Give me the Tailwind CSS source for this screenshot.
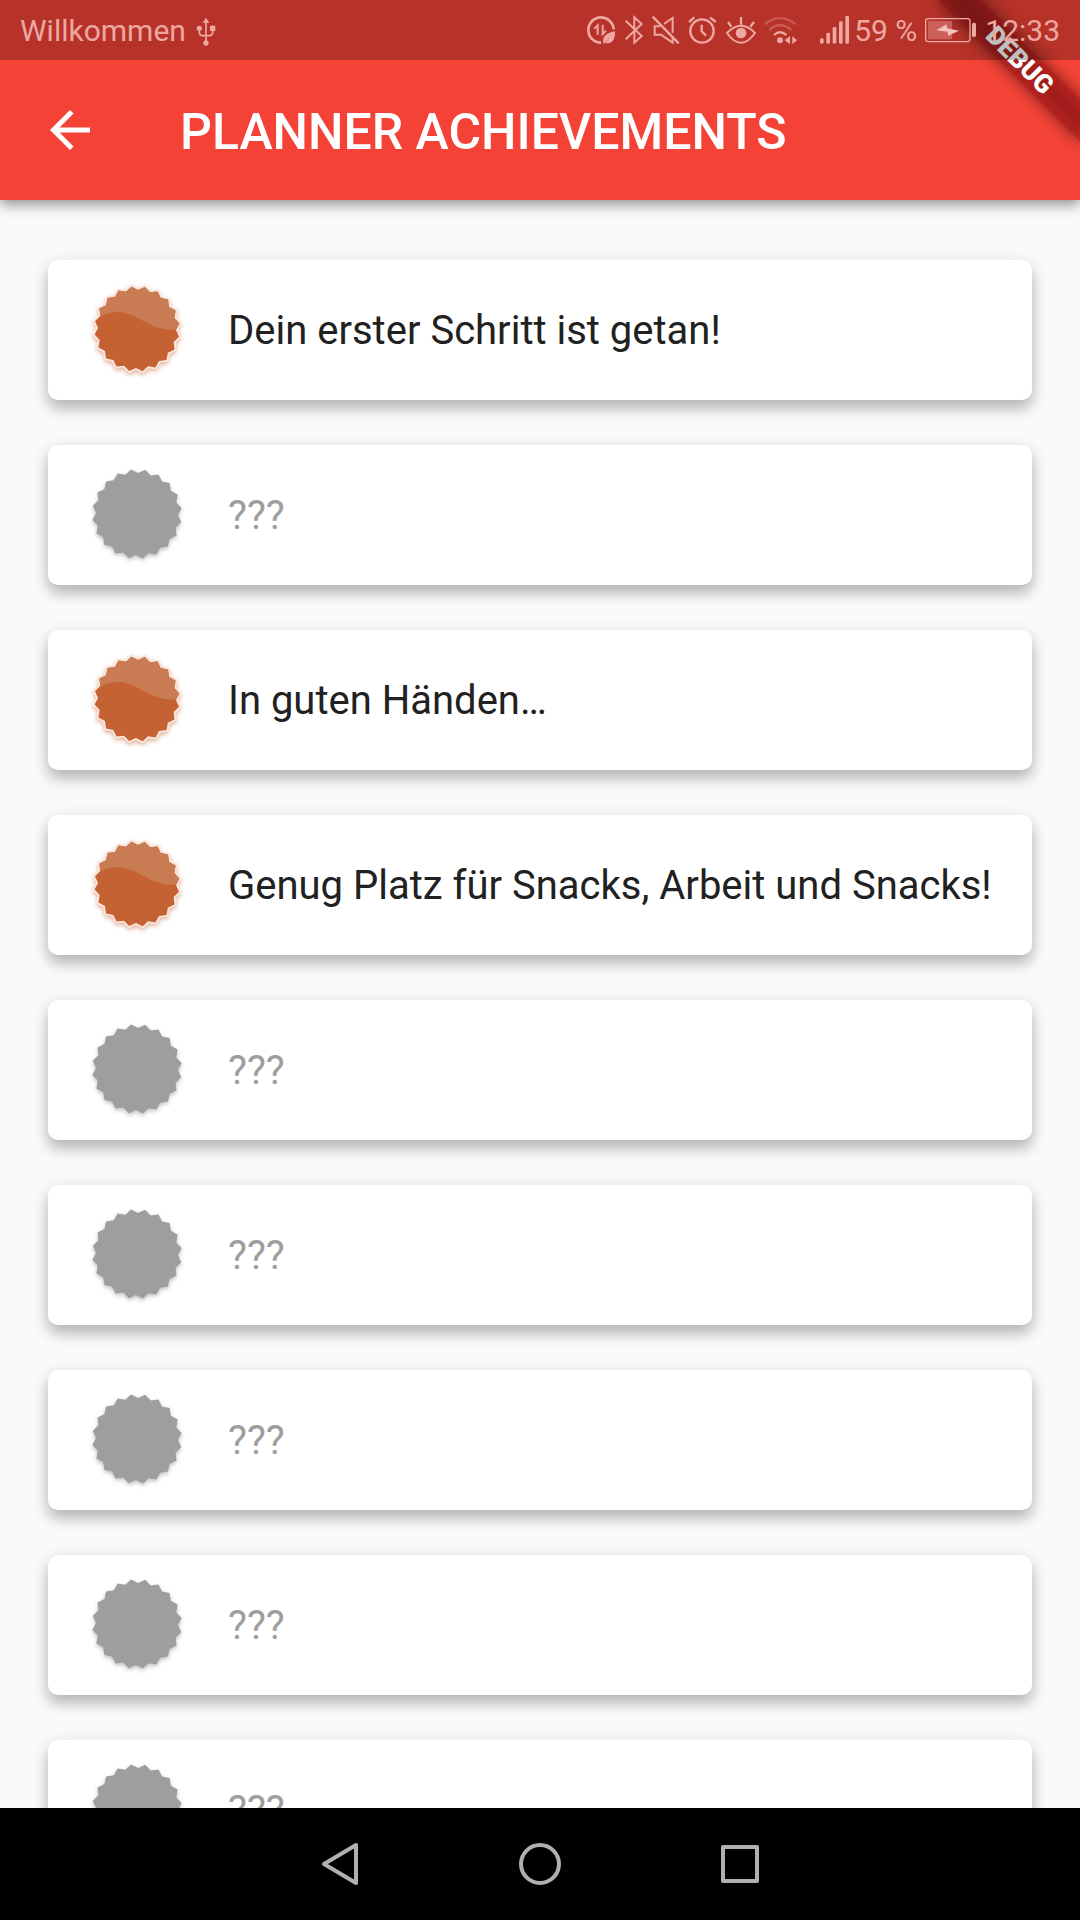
<!DOCTYPE html>
<html lang="de">
<head>
<meta charset="utf-8">
<meta name="viewport" content="width=device-width, initial-scale=1">
<title>Planner Achievements</title>
<script src="https://cdn.jsdelivr.net/npm/@tailwindcss/browser@4"></script>
</head>
<body class="relative flex h-screen flex-col overflow-hidden bg-[#fafafa] font-['Roboto',sans-serif] text-[#212121]">

<svg class="absolute size-0" aria-hidden="true">
  <symbol id="seal" viewBox="-48 -48 96 96">
    <path d="M8.2-44.2 13.7-38.6 21.5-39.5 25-32.5 32.6-31 33.8-23.2 40.6-19.4 39.3-11.6 44.6-5.9 41 1.1 44.2 8.2 38.6 13.7 39.5 21.5 32.5 25 31 32.6 23.2 33.8 19.4 40.6 11.6 39.3 5.9 44.6-1.1 41-8.2 44.2-13.7 38.6-21.5 39.5-25 32.5-32.6 31-33.8 23.2-40.6 19.4-39.3 11.6-44.6 5.9-41-1.1-44.2-8.2-38.6-13.7-39.5-21.5-32.5-25-31-32.6-23.2-33.8-19.4-40.6-11.6-39.3-5.9-44.6 1.1-41Z"/>
  </symbol>
  <clipPath id="sealClip">
    <path transform="scale(.95)" d="M8.2-44.2 13.7-38.6 21.5-39.5 25-32.5 32.6-31 33.8-23.2 40.6-19.4 39.3-11.6 44.6-5.9 41 1.1 44.2 8.2 38.6 13.7 39.5 21.5 32.5 25 31 32.6 23.2 33.8 19.4 40.6 11.6 39.3 5.9 44.6-1.1 41-8.2 44.2-13.7 38.6-21.5 39.5-25 32.5-32.6 31-33.8 23.2-40.6 19.4-39.3 11.6-44.6 5.9-41-1.1-44.2-8.2-38.6-13.7-39.5-21.5-32.5-25-31-32.6-23.2-33.8-19.4-40.6-11.6-39.3-5.9-44.6 1.1-41Z"/>
  </clipPath>
  <symbol id="bronze" viewBox="-48 -48 96 96">
    <use href="#seal" x="-48" y="-48" width="96" height="96" fill="#fbe6dd"/>
    <g clip-path="url(#sealClip)">
      <path fill="#c46233" d="M-48-48H48V48H-48Z"/>
      <path fill="#c97b54" d="M-48-48H48V-1C16 7 4-16-19-17-28-17-36-13-48-7Z"/>
    </g>
  </symbol>
</svg>

<header class="relative z-10 shrink-0 bg-[#f44336] text-white shadow-[0_5px_12px_rgba(0,0,0,0.4)]">
  <!-- diagonal debug ribbon over the top right corner, below the status bar's tint -->
  <div class="pointer-events-none absolute top-0 right-0 size-[200px] overflow-hidden">
    <div class="absolute top-[70px] left-[100px] h-[30px] w-[200px] origin-[100px_-70px] rotate-45">
      <div class="absolute inset-0 bg-black/50 blur-[8px]"></div>
      <div class="relative flex h-full items-center justify-center bg-[#b71c1c]/63 text-[26px] leading-none font-black">DEBUG</div>
    </div>
  </div>
  <div class="relative flex h-[60px] items-center bg-black/25 px-5 text-[30px] leading-none text-[#eda8a2]">
    <span class="mr-auto flex items-center gap-[10px] pt-[2px]">Willkommen
      <svg class="h-[30px] w-5" viewBox="582 45 60 90" fill="currentColor" stroke="currentColor" aria-label="USB"><path fill="none" stroke-width="5" d="M612 62V126M592 84V94Q592 104 602 104H622Q632 104 632 94V84"/><path stroke="none" d="M612 50 622 66H602Z"/><circle cx="612" cy="126" r="8" stroke="none"/><circle cx="592" cy="82" r="8" stroke="none"/><path stroke="none" d="M624 74H640V90H624Z"/></svg>
    </span>
    <span class="flex items-center gap-[6px]">
      <svg class="h-[30px] w-8" viewBox="42 45 96 90" fill="none" stroke="currentColor" stroke-width="8" aria-hidden="true"><path d="M131 88A38 38 0 1 0 93 128"/><path stroke-width="6" d="M73 86 83 76V104M98 74V102L108 92"/><path fill="currentColor" stroke="none" d="M101 133C94 108 112 98 135 94 136 122 124 134 106 129L122 108Z"/></svg>
      <svg class="h-[30px] w-6" viewBox="156 45 72 90" fill="none" stroke="currentColor" stroke-width="6" aria-hidden="true"><path d="M167 62 215 108 193 128V52L215 72 167 118"/></svg>
      <svg class="h-[30px] w-7" viewBox="246 45 84 90" fill="none" stroke="currentColor" stroke-width="6" aria-hidden="true"><path d="M270 79H254V104H273L308 128V112M308 98V54L282 72"/><path stroke-width="7" d="M248 50 326 130"/></svg>
      <svg class="h-[30px] w-8" viewBox="348 45 96 90" fill="none" stroke="currentColor" stroke-width="7" aria-hidden="true"><circle cx="396" cy="93" r="35"/><path d="M395 74V94L408 107M357 66 373 52M437 66 420 52"/></svg>
      <svg class="h-[30px] w-[34px]" viewBox="462 45 102 90" fill="none" stroke="currentColor" stroke-width="6" aria-hidden="true"><path d="M471 99Q513 56 555 99 513 158 471 99Z"/><circle cx="513" cy="99" r="16" fill="currentColor" stroke="none"/><path stroke-width="7" d="M513 51V74M474 66 484 80M552 66 541 80"/></svg>
      <svg class="h-[30px] w-[34px]" viewBox="582 45 102 90" fill="none" stroke="currentColor" stroke-width="7" aria-hidden="true"><path opacity=".35" d="M585 73Q630 36 677 73M598 90Q630 62 664 90"/><path d="M612 105Q630 89 649 105"/><circle cx="630" cy="121" r="9" fill="currentColor" stroke="none"/><path fill="currentColor" stroke="none" d="M644 121 660 108V133ZM681 121 667 108V133Z"/></svg>
      <svg class="ml-4 h-[30px] w-[30px]" viewBox="60 45 90 90" fill="currentColor" aria-hidden="true"><rect x="60" y="115" width="11" height="16" rx="4"/><rect x="79" y="98" width="11" height="33" rx="4"/><rect x="98" y="81" width="11" height="50" rx="4"/><rect x="117" y="64" width="11" height="67" rx="4"/><rect x="136" y="48" width="11" height="83" rx="4"/></svg>
      <span class="-ml-[2px] pt-[2px]">59 %</span>
      <svg class="ml-[2px] h-[30px] w-[52px]" viewBox="375 45 156 90" fill="currentColor" aria-hidden="true"><rect x="377" y="56" width="133" height="69" rx="8" fill="none" stroke="currentColor" stroke-width="4"/><rect x="384" y="63" width="72" height="55" rx="3" opacity=".4"/><path fill="#f3c5c1" d="M409 91 440 73 441 85 477 92 445 107 443 95Z"/><rect x="516" y="68" width="12" height="43" rx="5"/></svg>
      <time class="ml-[2px] pt-[2px]">12:33</time>
    </span>
  </div>
  <div class="flex h-[140px] items-center px-10">
    <button type="button" aria-label="Zurück" class="flex size-15 items-center justify-center">
      <svg class="size-[60px]" viewBox="0 0 24 24" fill="currentColor"><path d="M20 11H7.83l5.59-5.59L12 4l-8 8 8 8 1.410-1.410L7.830 13H20v-2z"/></svg>
    </button>
    <h1 class="ml-20 pt-1 text-[50px] leading-[60px] font-medium">PLANNER ACHIEVEMENTS</h1>
  </div>
</header>

<main class="min-h-0 flex-1 overflow-hidden">
  <ul id="list" class="flex flex-col gap-[45px] px-12 py-[60px]"></ul>
</main>

<nav class="z-10 flex h-28 shrink-0 items-center justify-center gap-[140px] bg-black text-[#b0b0b0]">
  <button type="button" aria-label="Zurück" class="flex size-15 items-center justify-center"><svg class="size-[60px]" viewBox="0 0 60 60" fill="none" stroke="currentColor" stroke-width="4" stroke-linejoin="round"><path d="M46 11V49L14 30Z"/></svg></button>
  <button type="button" aria-label="Startseite" class="flex size-15 items-center justify-center"><svg class="size-[60px]" viewBox="0 0 60 60" fill="none" stroke="currentColor" stroke-width="4"><circle cx="30" cy="30" r="19"/></svg></button>
  <button type="button" aria-label="Übersicht" class="flex size-15 items-center justify-center"><svg class="size-[60px]" viewBox="0 0 60 60" fill="none" stroke="currentColor" stroke-width="4" stroke-linejoin="round"><rect x="13" y="13" width="34" height="34"/></svg></button>
</nav>

<script>
  const locked = null;
  const achievements = ["Dein erster Schritt ist getan!", locked, "In guten Händen…", "Genug Platz für Snacks, Arbeit und Snacks!", locked, locked, locked, locked, locked];
  document.getElementById("list").innerHTML = achievements.map(title => `
    <li class="flex h-[140px] items-center gap-[43px] rounded-[10px] bg-white pl-[41px] text-[40px] leading-[48px] whitespace-nowrap shadow-[0_9px_14px_rgba(0,0,0,0.2),0_4px_18px_rgba(0,0,0,0.12)]">
      ${title
        ? `<svg class="mb-[3px] size-24 shrink-0 drop-shadow-[0_2px_2px_rgba(196,98,51,0.5)]" aria-hidden="true"><use href="#bronze"/></svg><span class="pt-[2px]">${title}</span>`
        : `<svg class="mb-[3px] size-24 shrink-0 fill-[#9e9e9e] drop-shadow-[0_2px_2px_rgba(0,0,0,0.25)]" aria-hidden="true"><use href="#seal"/></svg><span class="pt-[2px] text-[#9e9e9e]">???</span>`}
    </li>`).join("");
</script>
</body>
</html>
